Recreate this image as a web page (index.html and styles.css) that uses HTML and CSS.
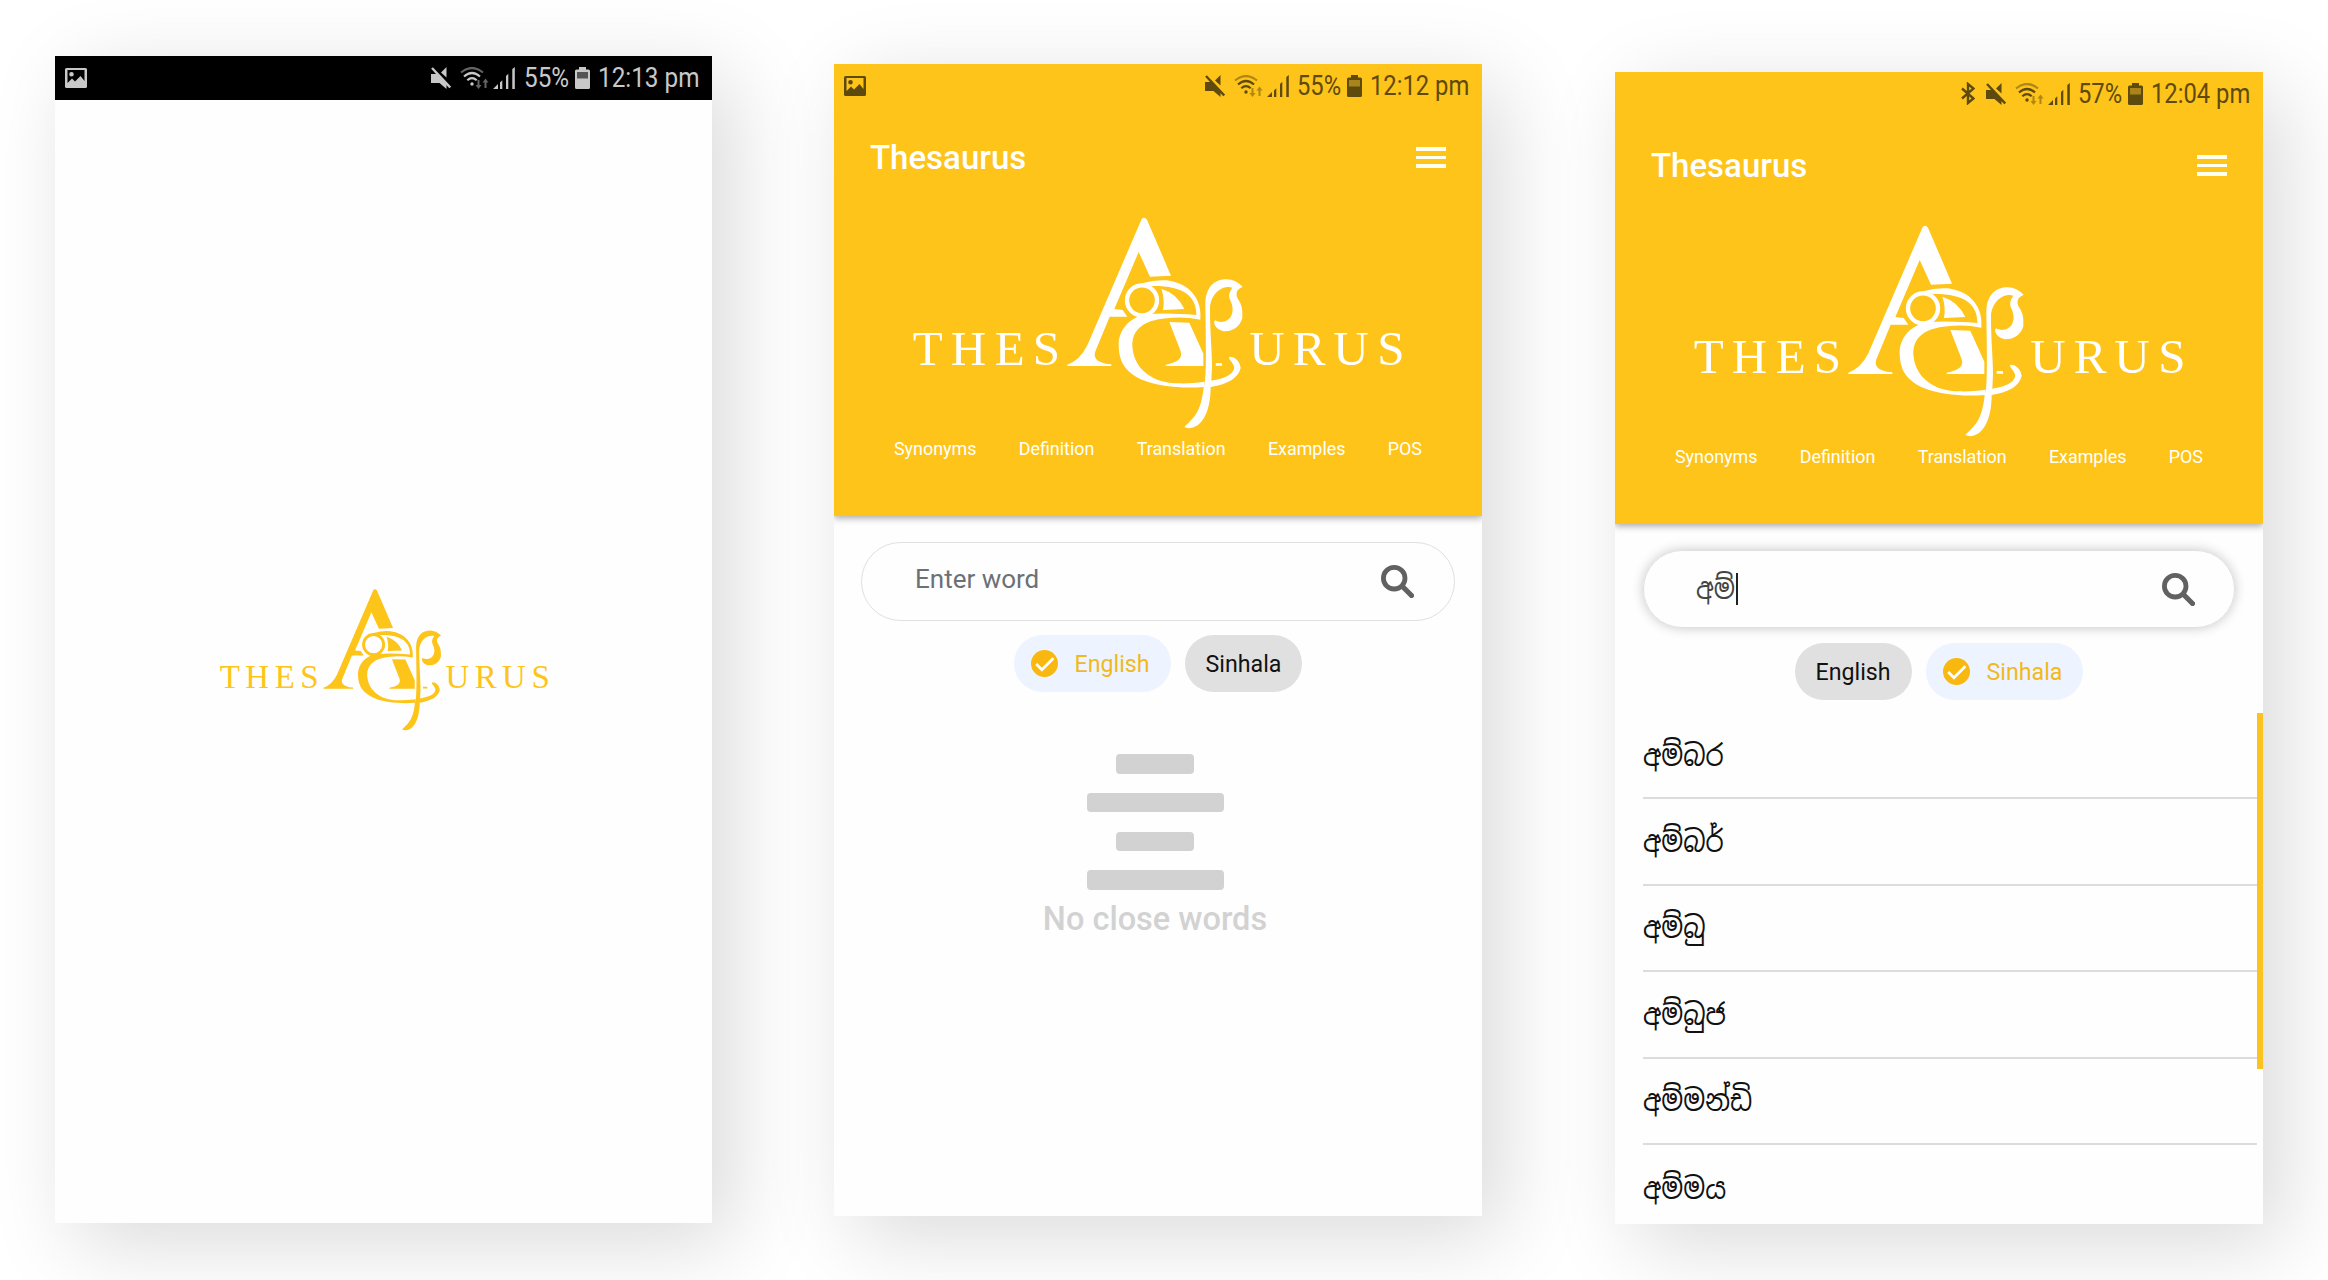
FILE: index.html
```
<!DOCTYPE html>
<html lang="en">
<head>
<meta charset="utf-8">
<title>Thesaurus</title>
<link rel="stylesheet" href="styles.css">
</head>
<body>
<svg class="defs" aria-hidden="true">
  <symbol id="mark" viewBox="30 40 1485 660">
    <g fill="currentColor">
      <path d="M725 58Q733 50 741 60L813 228L750 231L716 157L643 328L668 331L682 351L629 351L588 450Q570 488 634 494V499H502V495Q540 482 562 437Z"/>
      <path d="M784 267Q832 282 853 328L789 331Q795 298 784 267Z"/>
      <path d="M808 367L868 369L910 462V499H797V495Q852 486 842 455Z"/>
      <path d="M685 274Q730 238 800 242C870 250 907 300 901 360Q850 350 800 356C730 362 697 390 697 438C700 505 755 552 840 551Q870 552 914 546L912 562C850 567 780 562 730 542C680 520 656 490 656 435C656 390 690 352 740 344Q800 338 889 346C890 290 850 258 757 259Q735 252 685 274Z"/>
      <circle cx="726" cy="302" r="45" fill="none" stroke="currentColor" stroke-width="13"/>
      <path d="M916 310C918 260 945 239 980 239Q1008 240 1028 262C1012 268 1006 278 1012 295C1026 315 1028 330 1027 355C1020 385 990 398 968 394C945 388 938 368 945 362C965 372 985 365 993 350C1000 335 1000 320 990 300C984 285 990 275 997 264C970 254 930 280 930 330C930 400 936 450 936 500L934 543C990 535 1005 515 1002 500C998 485 983 478 988 471C1005 470 1020 485 1022 505C1015 535 985 553 932 562C932 600 925 640 905 665C890 684 868 690 853 682C880 655 903 640 911 562L915 545C920 500 917 400 916 310Z"/>
      <path d="M947 490H965L967 498H947Z"/>
    </g>
  </symbol>
  <symbol id="i-picture" viewBox="0 0 22 20"><path fill="currentColor" fill-rule="evenodd" d="M1.500 0H20.500Q22 0 22 1.500V18.500Q22 20 20.500 20H1.500Q0 20 0 18.500V1.500Q0 0 1.500 0ZM2.500 2V15L7 10.500L10 13.500L15.500 8L19.500 13V2ZM6.500 4A2.300 2.300 0 1 1 6.500 8.600A2.300 2.300 0 1 1 6.500 4Z"/></symbol>
  <symbol id="i-mute" viewBox="0 0 20 22"><path fill="currentColor" d="M10 5.500L15.500 0V10.500ZM0 7H6L15.500 17V22L8.500 16H0Z"/><path d="M1 1L19.200 20.500" stroke="currentColor" stroke-width="2.400"/></symbol>
  <symbol id="i-wifi" viewBox="0 0 29 22"><g fill="none" stroke="currentColor" stroke-width="2.200"><path opacity=".5" d="M1 5.500Q12 -3.500 23 5.500"/><path d="M4 9.500Q12 2.500 20 9.500M7.300 13.300Q12 9 16.700 13.300"/></g><circle cx="12" cy="17" r="1.700" fill="currentColor"/><path opacity=".5" fill="currentColor" d="M17.500 13H19.500V18H21.500L18.500 22L15.500 18H17.500ZM24.500 21V15.500H22.500L25.500 11.500L28.500 15.500H26.500V21Z"/></symbol>
  <symbol id="i-signal" viewBox="0 0 22 22"><path fill="currentColor" d="M0 22L5 17V22ZM7 15.500L9.300 13.200V22H7ZM13 9L15.300 6.700V22H13ZM19.300 2L21.800 0V22H19.300Z"/></symbol>
  <symbol id="i-battery" viewBox="0 0 15 22"><path fill="currentColor" fill-rule="evenodd" d="M4 0H11V2.500H13.500Q15 2.500 15 4V20.500Q15 22 13.500 22H1.500Q0 22 0 20.500V4Q0 2.500 1.500 2.500H4Z"/><rect class="charge" x="2" y="5" width="11" height="6.500"/></symbol>
  <symbol id="i-bluetooth" viewBox="0 0 14 22"><path fill="none" stroke="currentColor" stroke-width="2.400" d="M1 6L12.500 16L7 20.500V1.500L12.500 6L1 16"/></symbol>
  <symbol id="i-search" viewBox="0 0 33 33"><circle cx="13.200" cy="13.200" r="10.800" fill="none" stroke="currentColor" stroke-width="4.800"/><path d="M21.500 21.500L30.500 30.500" stroke="currentColor" stroke-width="5.200" stroke-linecap="round"/></symbol>
  <symbol id="i-check" viewBox="0 0 26 26"><circle cx="13" cy="13" r="13" fill="currentColor"/><path d="M5 13.500L10.500 19L21.500 8" fill="none" stroke="#fff" stroke-width="2.600"/></symbol>
</svg>

<main class="stage">
  <section class="phone splash">
    <div class="status">
      <svg class="ic-picture"><use href="#i-picture"/></svg>
      <svg class="ic-mute"><use href="#i-mute"/></svg>
      <svg class="ic-wifi"><use href="#i-wifi"/></svg>
      <svg class="ic-signal"><use href="#i-signal"/></svg>
      <span class="percent"><span class="narrow">55%</span></span>
      <svg class="ic-battery"><use href="#i-battery"/></svg>
      <span class="time"><span class="narrow">12:13 pm</span></span>
    </div>
    <svg class="splash-logo" viewBox="30 40 1485 660"><text class="logo-text" y="496" x="38 152 284 398">THES</text><use href="#mark" x="30" y="40" width="1485" height="660"/><text class="logo-text" y="496" x="1048 1178 1300 1432">URUS</text></svg>
  </section>

  <section class="phone home">
    <header class="header">
      <div class="status">
        <svg class="ic-picture"><use href="#i-picture"/></svg>
        <svg class="ic-mute"><use href="#i-mute"/></svg>
        <svg class="ic-wifi"><use href="#i-wifi"/></svg>
        <svg class="ic-signal"><use href="#i-signal"/></svg>
        <span class="percent"><span class="narrow">55%</span></span>
        <svg class="ic-battery"><use href="#i-battery"/></svg>
        <span class="time"><span class="narrow">12:12 pm</span></span>
      </div>
      <div class="appbar"><h1 class="title">Thesaurus</h1><div class="menu"><i></i><i></i><i></i></div></div>
      <svg class="header-logo" viewBox="30 40 1485 660"><text class="logo-text" y="496" x="38 152 284 398">THES</text><use href="#mark" x="30" y="40" width="1485" height="660"/><text class="logo-text" y="496" x="1048 1178 1300 1432">URUS</text></svg>
      <nav class="tabs"><span>Synonyms</span><span>Definition</span><span>Translation</span><span>Examples</span><span>POS</span></nav>
    </header>
    <div class="search"><span class="placeholder">Enter word</span><svg class="ic-search"><use href="#i-search"/></svg></div>
    <div class="chips">
      <span class="chip active"><svg class="ic-check"><use href="#i-check"/></svg>English</span>
      <span class="chip">Sinhala</span>
    </div>
    <div class="empty">
      <i class="line short"></i><i class="line"></i><i class="line short"></i><i class="line"></i>
      <p class="empty-text">No close words</p>
    </div>
  </section>

  <section class="phone results">
    <header class="header">
      <div class="status">
        <svg class="ic-bluetooth"><use href="#i-bluetooth"/></svg>
        <svg class="ic-mute"><use href="#i-mute"/></svg>
        <svg class="ic-wifi"><use href="#i-wifi"/></svg>
        <svg class="ic-signal"><use href="#i-signal"/></svg>
        <span class="percent"><span class="narrow">57%</span></span>
        <svg class="ic-battery"><use href="#i-battery"/></svg>
        <span class="time"><span class="narrow">12:04 pm</span></span>
      </div>
      <div class="appbar"><h1 class="title">Thesaurus</h1><div class="menu"><i></i><i></i><i></i></div></div>
      <svg class="header-logo" viewBox="30 40 1485 660"><text class="logo-text" y="496" x="38 152 284 398">THES</text><use href="#mark" x="30" y="40" width="1485" height="660"/><text class="logo-text" y="496" x="1048 1178 1300 1432">URUS</text></svg>
      <nav class="tabs"><span>Synonyms</span><span>Definition</span><span>Translation</span><span>Examples</span><span>POS</span></nav>
    </header>
    <div class="search focused"><span class="query"><span class="sinhala">අම්</span></span><i class="caret"></i><svg class="ic-search"><use href="#i-search"/></svg></div>
    <div class="chips">
      <span class="chip">English</span>
      <span class="chip active"><svg class="ic-check"><use href="#i-check"/></svg>Sinhala</span>
    </div>
    <div class="list">
      <ul class="words">
        <li><span class="sinhala">අම්බර</span></li>
        <li><span class="sinhala">අම්බර්</span></li>
        <li><span class="sinhala">අම්බු</span></li>
        <li><span class="sinhala">අම්බුජ</span></li>
        <li><span class="sinhala">අම්මන්ඩි</span></li>
        <li><span class="sinhala">අම්මය</span></li>
      </ul>
      <div class="scrollbar"></div>
    </div>
  </section>
</main>
</body>
</html>
```
FILE: styles.css
```
* { box-sizing: border-box; }
body {
  margin: 0;
  width: 2328px;
  height: 1280px;
  overflow: hidden;
  background: #fff;
  font-family: Roboto, "Noto Sans Sinhala", "Noto Sans", sans-serif;
}
.defs { position: absolute; width: 0; height: 0; }
.logo-text { font: 147px "Liberation Serif", serif; fill: currentColor; }
svg { display: block; flex: none; }

.stage { display: flex; align-items: flex-start; height: 1280px; padding-left: 55px; }
.phone {
  --charge: #a8841a;
  flex: none;
  width: 648px;
  height: 1152px;
  background: #fefefe;
  box-shadow: 20px 20px 80px rgba(0, 0, 0, .15);
}
.splash { --charge: #555; width: 657px; height: 1167px; margin-top: 56px; }
.home { margin-top: 64px; margin-left: 122px; }
.results { margin-top: 72px; margin-left: 133px; }

.status {
  display: flex;
  align-items: flex-start;
  height: 44px;
  padding: 11px 0 0 10px;
  color: #5f4a0d;
  font-size: 27px;
  line-height: 23px;
}
.splash .status { background: #000; color: #c8c8c8; }
.ic-picture { width: 22px; height: 20px; margin-top: 1px; }
.ic-bluetooth { width: 14px; height: 23px; margin-left: 336px; margin-top: -1px; }
.ic-mute { width: 20px; height: 22px; margin-left: 339px; }
.ic-bluetooth + .ic-mute { margin-left: 11px; }
.splash .ic-mute { margin-left: 344px; }
.ic-wifi { width: 29px; height: 22px; margin-left: 9px; }
.ic-signal { width: 22px; height: 22px; margin-left: 4px; }
.percent { width: 43px; margin-left: 8px; }
.splash .percent { width: 44px; margin-left: 9px; }
.ic-battery { width: 15px; height: 22px; margin-left: 7px; }
.charge { fill: var(--charge); }
.time { width: 100px; margin-left: 8px; }
.narrow { display: inline-block; white-space: nowrap; transform: scaleX(.88); transform-origin: left; }
.splash .narrow { transform: scaleX(.9); }

.splash-logo { width: 332px; height: 147.6px; margin: 486px 0 0 163px; color: #fdc41a; }

.header {
  height: 452px;
  background: #fec41a;
  color: #fff;
  box-shadow: 0 2px 7px rgba(0, 0, 0, .35);
  clip-path: inset(0 0 -14px 0);
}
.appbar { display: flex; justify-content: space-between; align-items: center; height: 99px; padding: 0 36px 0 36px; }
.title { margin: 0; font-size: 33px; font-weight: 500; line-height: 40px; }
.menu { display: flex; flex-direction: column; gap: 5px; }
.menu i { width: 30px; height: 3.500px; background: #fffff0; }
.header-logo { width: 495px; height: 220px; margin: 6px 0 0 76px; }
.tabs { display: flex; justify-content: space-between; margin-top: 4px; padding: 0 60px; font-size: 17.900px; line-height: 24px; }

.search {
  display: flex;
  align-items: center;
  width: 594px;
  height: 79px;
  margin: 26px 0 0 27px;
  padding: 0 40px 0 53px;
  border: 1.500px solid #e0e0e0;
  border-radius: 40px;
  font-size: 26px;
}
.placeholder { margin-bottom: 6px; color: #6b7176; }
.focused { width: 592px; height: 78px; margin: 26px 0 15px 28px; padding: 0 39px 0 52px; box-shadow: 0 0 12px rgba(0, 0, 0, .22); }
.query { width: 40px; font-size: 29px; color: #444; line-height: 32px; white-space: nowrap; }
.caret { width: 2px; height: 32px; background: #222; }
.ic-search { width: 33px; height: 33px; margin-left: auto; color: #616161; }
.sinhala { display: inline-block; transform: scaleX(.86); transform-origin: left; }

.chips { display: flex; justify-content: center; gap: 14px; margin-top: 14px; }
.focused + .chips { margin-top: 0; }
.chip { display: flex; align-items: center; height: 57px; padding: 0 21px; border-radius: 29px; background: #e0e0e0; color: #111; font-size: 23.200px; }
.chip.active { padding: 0 21px 0 17px; background: #edf4ff; color: #f0b91e; }
.ic-check { width: 27px; height: 27px; margin-right: 17px; color: #f9b80f; }

.empty { display: flex; flex-direction: column; align-items: center; gap: 19.300px; margin-top: 62px; padding-right: 6px; }
.line { width: 137px; height: 19.500px; border-radius: 4px; background: #d2d2d2; }
.short { width: 78px; }
.empty-text { margin: -10px 0 0; font-size: 32.500px; font-weight: 500; line-height: 40px; color: #d2d2d2; }

.list { display: flex; height: 511px; margin-top: 13px; overflow: hidden; }
.words { width: 614px; margin: 0 0 0 28px; padding: 0; list-style: none; font-size: 30px; color: #111; }
.words li { display: flex; align-items: center; height: 86.400px; border-bottom: 2px solid #dcdcdc; }
.words li:last-child { border: 0; }
.scrollbar { width: 6px; height: 356px; background: #fcc220; }
```
